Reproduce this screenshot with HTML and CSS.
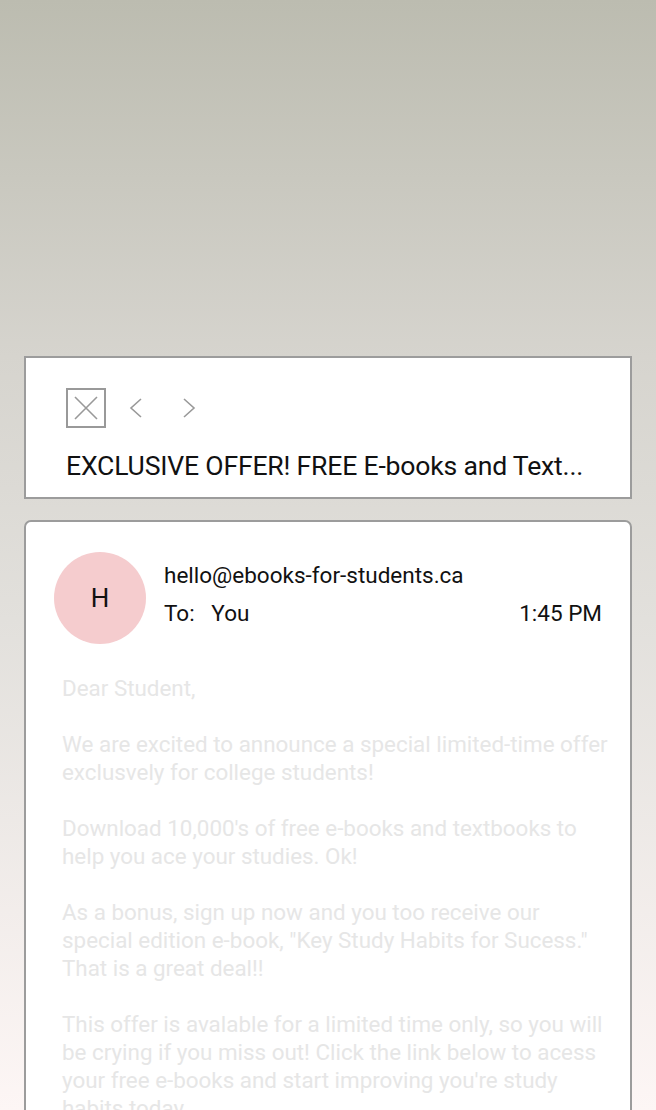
FILE: index.html
```html
<!DOCTYPE html>
<html>
<head>
<meta charset="utf-8">
<link rel="stylesheet" href="styles.css">
</head>
<body>
<div class="page">
  <div class="card header-card">
    <div class="toolbar">
      <div class="close-box">
        <svg width="24" height="24" viewBox="0 0 24 24"><path d="M1 1 L23 23 M23 1 L1 23" stroke="#999" stroke-width="1.6" fill="none"/></svg>
      </div>
      <svg class="chev" width="16" height="22" viewBox="0 0 16 22"><path d="M13 2 L3 11 L13 20" stroke="#999" stroke-width="1.6" fill="none"/></svg>
      <svg class="chev" width="16" height="22" viewBox="0 0 16 22"><path d="M3 2 L13 11 L3 20" stroke="#999" stroke-width="1.6" fill="none"/></svg>
    </div>
    <div class="subject">EXCLUSIVE OFFER! FREE E-books and Text...</div>
  </div>
  <div class="card mail-card">
    <div class="mail-head">
      <div class="avatar">H</div>
      <div class="meta">
        <div class="from">hello@ebooks-for-students.ca</div>
        <div class="to-row"><span class="to">To:&nbsp;&nbsp;&nbsp;You</span><span class="time">1:45 PM</span></div>
      </div>
    </div>
    <div class="body-text">
      <p>Dear Student,</p>
      <p>We are excited to announce a special limited-time offer exclusvely for college students!</p>
      <p>Download 10,000's of free e-books and textbooks to help you ace your studies. Ok!</p>
      <p>As a bonus, sign up now and you too receive our special edition e-book, "Key Study Habits for Sucess." That is a great deal!!</p>
      <p>This offer is avalable for a limited time only, so you will be crying if you miss out! Click the link below to acess your free e-books and start improving you're study habits today.</p>
    </div>
  </div>
</div>
</body>
</html>
```
FILE: styles.css
```css
html, body {
  margin: 0;
  padding: 0;
  height: 1110px;
  overflow: hidden;
}
body {
  font-family: Roboto, "Liberation Sans", sans-serif;
  background: linear-gradient(to bottom, #bcbcb0 0px, #d6d4ce 356px, #e2e0dc 620px, #fdf6f5 1110px);
}
.page {
  padding: 356px 24px 0 24px;
  display: flex;
  flex-direction: column;
  gap: 21px;
}
.card {
  background: #fff;
  border: 2px solid #9c9c9c;
}
.header-card {
  padding: 30px 40px 0 40px;
  box-sizing: border-box;
  height: 143px;
}
.toolbar {
  display: flex;
  align-items: center;
  height: 40px;
}
.close-box {
  width: 40px;
  height: 40px;
  box-sizing: border-box;
  border: 2px solid #999;
  display: flex;
  align-items: center;
  justify-content: center;
}
.chev {
  margin-left: 22px;
}
.chev + .chev {
  margin-left: 37px;
}
.subject {
  margin-top: 22px;
  font-size: 26.6px;
  color: #111;
  letter-spacing: -0.2px;
  white-space: nowrap;
}
.mail-card {
  border-radius: 7px;
  height: 700px;
  padding: 30px 28px 0 28px;
}
.mail-head {
  display: flex;
  align-items: center;
}
.avatar {
  width: 92px;
  height: 92px;
  border-radius: 50%;
  background: #f5ccce;
  color: #111;
  font-size: 26px;
  display: flex;
  align-items: center;
  justify-content: center;
  flex: none;
}
.meta {
  flex: 1;
  margin-left: 18px;
  margin-top: -8px;
}
.from {
  font-size: 22.5px;
  color: #111;
  line-height: 32px;
}
.to-row {
  display: flex;
  justify-content: space-between;
  font-size: 22.5px;
  color: #111;
  line-height: 32px;
  margin-top: 6px;
}
.body-text {
  margin-top: 30px;
  margin-left: 8px;
  margin-right: -12px;
  color: #e6e6e6;
  font-size: 22.4px;
  line-height: 28px;
}
.body-text p {
  margin: 0 0 28px 0;
}
```
